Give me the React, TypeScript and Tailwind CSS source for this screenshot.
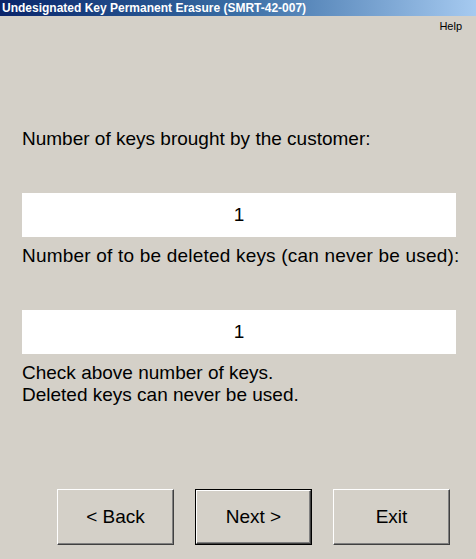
import React from "react";

const ui = { fontFamily: '"Liberation Sans", Arial, sans-serif' };

function WinButton({ label, isDefault }: { label: string; isDefault?: boolean }) {
  const face = (
    <div className="flex h-full w-full items-center justify-center border border-t-white border-l-white border-r-[#404040] border-b-[#404040] bg-[#d4d0c8] shadow-[inset_-1px_-1px_0_#808080] text-[19px] text-black">
      {label}
    </div>
  );
  if (isDefault) {
    return <div className="h-[56px] w-[117px] border border-black">{face}</div>;
  }
  return <div className="h-[56px] w-[117px]">{face}</div>;
}

export default function App() {
  return (
    <div className="h-[559px] w-[476px] overflow-hidden bg-[#d4d0c8]" style={ui}>
      {/* barra de titulo */}
      <div className="flex h-[16px] items-center bg-gradient-to-r from-[#0a246a] via-[#3a6ea5] to-[#a6caf0] pl-[2px]">
        <span className="text-[12px] font-bold leading-none text-white">
          Undesignated Key Permanent Erasure (SMRT-42-007)
        </span>
      </div>

      {/* menu */}
      <div className="flex h-[20px] items-center justify-end pr-[14px]">
        <span className="text-[11px] leading-none text-black">Help</span>
      </div>

      <div className="pl-[22px] pr-[20px] text-[19px] leading-[22px] text-black">
        <p className="mt-[92px]">Number of keys brought by the customer:</p>
        <div className="mt-[43px] flex h-[44px] items-center justify-center bg-white">1</div>
        <p className="mt-[8px] whitespace-nowrap tracking-[0.2px]">Number of to be deleted keys (can never be used):</p>
        <div className="mt-[43px] flex h-[44px] items-center justify-center bg-white">1</div>
        <p className="mt-[8px]">Check above number of keys.</p>
        <p>Deleted keys can never be used.</p>
      </div>

      <div className="mt-[83px] flex gap-[21px] pl-[57px]">
        <WinButton label="< Back" />
        <WinButton label="Next >" isDefault />
        <WinButton label="Exit" />
      </div>
    </div>
  );
}
